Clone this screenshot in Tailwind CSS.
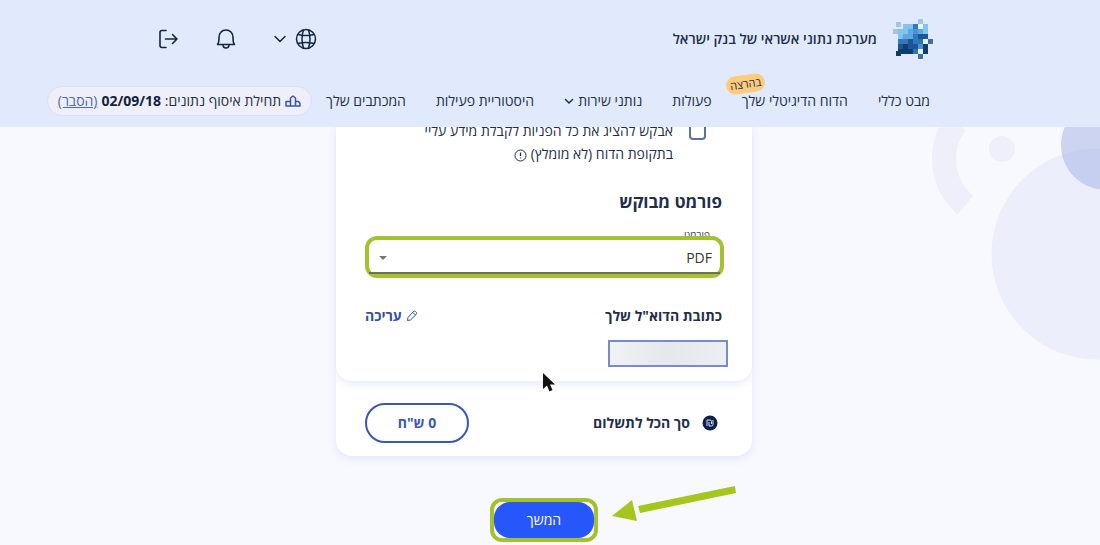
<!DOCTYPE html>
<html lang="he" dir="rtl">
  <head>
    <meta charset="UTF-8" />
    <meta name="viewport" content="width=device-width, initial-scale=1" />
    <title>מערכת נתוני אשראי של בנק ישראל</title>
    <script src="https://cdn.jsdelivr.net/npm/@tailwindcss/browser@4"></script>
  </head>
  <body class="relative h-screen overflow-hidden bg-[#f8f9ff] font-['Open_Sans','Noto_Sans',sans-serif] text-sm text-[#1f2f4a]">
    <!-- background shapes -->
    <svg class="absolute right-0 top-0" width="200" height="380" viewBox="900 0 200 380" aria-hidden="true">
      <circle cx="1097" cy="254" r="105.500" fill="#eceefb" />
      <circle cx="1002" cy="149" r="13" fill="#eeeffa" />
      <path d="M965.500 205A60 60 0 0 1 956 123" fill="none" stroke="#eeeffa" stroke-width="24" />
      <circle cx="1106" cy="145" r="45" fill="#a9b6e8" fill-opacity=".55" />
    </svg>

    <header class="relative z-20 bg-[#e1eafd] h-[127px]">
      <div class="flex h-[78px] items-center justify-between pr-[167px] pl-[157px]">
        <a href="#" class="flex items-center gap-4 text-sm font-semibold">
          <svg width="40" height="40" viewBox="0 0 40 40" shape-rendering="crispEdges" aria-hidden="true">
            <path fill="#4b93d6" d="M5 5h30v30H5z" />
            <path fill="#85c3ef" d="M10 5h15v5H10zM5 10h10v5H5zM5 15h5v5H5zM30 5h5v10h-5z" />
            <path fill="#5ea7e2" d="M15 10h5v10h-5zM25 10h5v5h-5zM10 15h5v5h-5z" />
            <path fill="#e1eafd" d="M5 5h5v5H5z" />
            <path fill="#a3c6de" d="M3 3h5v5H3zM0 10h5v5H0zM25 0h5v5h-5z" />
            <path fill="#3378bd" d="M20 5h5v5h-5zM20 15h5v10h-5zM5 20h10v5H5zM25 15h5v5h-5z" />
            <path fill="#1a5796" d="M15 20h5v10h-5zM25 15h10v5H25zM5 25h5v5H5zM20 25h5v5h-5z" />
            <path fill="#0e3d70" d="M10 25h5v5h-5zM5 30h10v5H5zM30 25h5v10h-5zM15 30h5v5h-5z" />
            <path fill="#2c73b3" d="M20 30h5v5h-5zM25 20h5v5h-5z" />
            <path fill="#e6f3fc" d="M25 5h5v5h-5zM30 20h5v5h-5zM25 30h5v5h-5z" />
            <path fill="#123c5b" d="M3 32h5v5H3z" />
            <path fill="#3f7099" d="M35 20h5v5h-5zM25 35h5v5h-5z" />
          </svg>
          <span>מערכת נתוני אשראי של בנק ישראל</span>
        </a>
        <div class="flex items-center gap-9 text-[#14263d]">
          <button type="button" aria-label="שפה" class="flex items-center gap-2">
            <svg width="22" height="22" viewBox="0 0 22 22" fill="none" stroke="currentColor" stroke-width="1.500">
              <circle cx="11" cy="11" r="9.500" />
              <path d="M2.800 6.500Q11 8.500 19.200 6.500M2.800 15.500Q11 13.500 19.200 15.500M8.500 1.800Q5.500 11 8.500 20.200M13.500 1.800Q16.500 11 13.500 20.200" />
            </svg>
            <svg width="14" height="14" viewBox="0 0 14 14" fill="none" stroke="currentColor" stroke-width="1.500" stroke-linecap="round" stroke-linejoin="round"><path d="M2 4.500l5 5 5-5" /></svg>
          </button>
          <button type="button" aria-label="התראות">
            <svg width="22" height="22" viewBox="0 0 22 22" fill="none" stroke="currentColor" stroke-width="1.600" stroke-linecap="round" stroke-linejoin="round">
              <path d="M2.500 16.500h17q-1.500-1.500-1.500-7C18 5 15 2 11 2S4 5 4 9.500q0 5.500-1.500 7zM8 16.500c0 2.200 1.200 3.500 3 3.500s3-1.300 3-3.500" />
            </svg>
          </button>
          <button type="button" aria-label="יציאה">
            <svg width="22" height="22" viewBox="0 0 22 22" fill="none" stroke="currentColor" stroke-width="1.600" stroke-linecap="round" stroke-linejoin="round">
              <path d="M9 2.500H5Q3 2.500 3 4.500v13q0 2 2 2h4M8.500 11H20M15.500 6.500 20 11l-4.500 4.500" />
            </svg>
          </button>
        </div>
      </div>

      <nav class="flex items-center gap-[30px] whitespace-nowrap pr-[170px] pt-2">
        <a href="#">מבט כללי</a>
        <a href="#" class="relative">
          הדוח הדיגיטלי שלך
          <span class="absolute -left-4 -top-4 -rotate-8 rounded-full bg-[#fccb7c] px-1 text-[11px] leading-[18px]">בהרצה</span>
        </a>
        <a href="#">פעולות</a>
        <a href="#" class="flex items-center gap-1">
          נותני שירות
          <svg width="10" height="10" viewBox="0 0 10 10" fill="none" stroke="currentColor" stroke-width="1.500" stroke-linecap="round"><path d="M1.500 3.500 5 7l3.500-3.500" /></svg>
        </a>
        <a href="#">היסטוריית פעילות</a>
        <a href="#">המכתבים שלך</a>
        <div class="-mr-4 flex h-[30px] items-center gap-1 rounded-full border border-[#dcdff2] bg-[#eeeffb] px-2.5">
          <svg width="16" height="12" viewBox="0 0 16 12" fill="none" stroke="#3b55a5" stroke-width="1.500" stroke-linejoin="round"><path d="M1 6.500h4.500V11H1zM5.500 3l2.500-2 2.500 2v8h-5zM10.500 6.500l3 0 1.500 2V11h-4.500z" /></svg>
          <span>תחילת איסוף נתונים: <b class="text-[#14233b]">02/09/18</b></span>
          <a href="#" class="text-[#4f69ae] underline">(הסבר)</a>
        </div>
      </nav>
    </header>

    <main class="relative z-10 flex flex-col items-center pr-3">
      <form class="relative w-[416px] rounded-b-2xl bg-white shadow-[0_3px_10px_#e3e6fa]">
        <section class="rounded-b-2xl bg-white pr-[30px] pl-[29px] pb-[14px] shadow-[0_3px_8px_#e9ebfa]">
          <div class="-mt-2 flex items-start gap-4 pr-4">
            <input id="requests" type="checkbox" class="mt-1 size-[17px] shrink-0 appearance-none rounded-sm border-2 border-[#5a729c] bg-white" />
            <label for="requests" class="w-[260px] leading-[23px]">
              אבקש להציג את כל הפניות לקבלת מידע עליי<br />
              בתקופת הדוח (לא מומלץ)
              <svg class="inline" width="13" height="13" viewBox="0 0 13 13" fill="none" stroke="currentColor"><circle cx="6.500" cy="6.500" r="5.500" /><path d="M6.500 3.500v3.500M6.500 8.500v1" stroke-width="1.300" /></svg>
            </label>
          </div>

          <h2 class="mt-[23px] text-[17px] font-bold leading-7">פורמט מבוקש</h2>

          <div class="mt-3 h-2 pr-3 text-[10px] leading-3">
            <label for="format" class="block text-[#3c4451]">פורמט</label>
          </div>
          <div class="relative -mr-0.5 h-[42px] rounded-xl border-4 border-[#a4c230] bg-white">
            <select id="format" class="h-[34px] w-full appearance-none border-b-2 border-[#6b7355] bg-transparent px-2 pt-1 text-sm text-[#333]">
              <option>PDF</option>
            </select>
            <svg class="pointer-events-none absolute left-2.5 top-4" width="8" height="4" viewBox="0 0 8 4" fill="#777"><path d="M0 0h8L4 4z" /></svg>
          </div>

          <div class="mt-[26px] flex items-center justify-between text-sm font-bold leading-6">
            <label for="email">כתובת הדוא"ל שלך</label>
            <button type="button" class="flex items-center gap-1 text-[#3450ac]">
              <svg width="12" height="12" viewBox="0 0 12 12" fill="none" stroke="currentColor" stroke-linejoin="round"><path d="M1.500 10.500 2 7.500l5.500-6q1-.8 2 0l.8.800q.8 1 0 2L4.500 10zM7 2.500l2.500 2.500" /></svg>
              עריכה
            </button>
          </div>
          <input id="email" type="text" class="-mr-[6px] mt-3 block h-[27px] w-[120px] border-2 border-[#7b8cc3] bg-linear-to-l from-[#eceff1] via-[#e5e8eb] to-[#f0f3f6]" />
        </section>

        <section class="flex h-[75px] items-center justify-between pr-[34px] pl-[29px] pt-2">
          <div class="flex items-center gap-3 text-sm font-bold">
            <svg width="16" height="16" viewBox="0 0 16 16" fill="none"><circle cx="8" cy="8" r="7.500" fill="#0d1f4b" /><path d="M5 11V5h3q1.500 0 1.500 1.500V9M7 7v4h2.500q1.500 0 1.500-1.500V5" stroke="#d9e3fa" /></svg>
            <span>סך הכל לתשלום</span>
          </div>
          <output class="flex h-10 w-[104px] items-center justify-center rounded-full border-2 border-[#3957b5] font-bold text-[#3957b5]">0 ש"ח</output>
        </section>
      </form>

      <div class="relative mt-[42px]">
        <div class="rounded-xl border-4 border-[#a4c230] bg-white">
          <button type="button" class="block h-9 w-[100px] rounded-2xl bg-[#2756fb] text-sm text-white">המשך</button>
        </div>
        <svg class="absolute -top-3.5 left-[122px]" width="126" height="42" viewBox="0 0 126 42" fill="#a4c61d" aria-hidden="true"><path d="M0 32 20 16l5 21zM26 22l97-20 1 7-96 20z" /></svg>
      </div>
    </main>

    <!-- pointer -->
    <svg class="absolute left-[543px] top-[373px] z-30" width="12" height="19" viewBox="0 0 12 19" aria-hidden="true"><path d="M0 0v16l4-3.500 2.500 6 3-1.500L7 11.500h5z" fill="#111" /></svg>
  </body>
</html>
